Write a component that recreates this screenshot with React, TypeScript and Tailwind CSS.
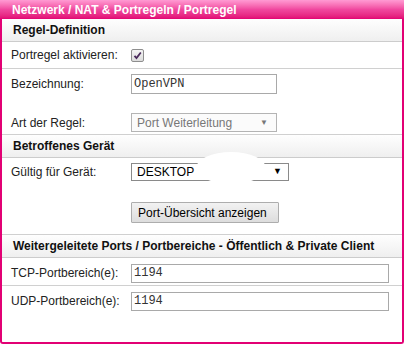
import React from 'react';

const font = { fontFamily: '"Liberation Sans", Arial, sans-serif' };
const mono = { fontFamily: '"Liberation Mono", "Courier New", monospace' };

const SectionHeader: React.FC<{ title: string }> = ({ title }) => (
  <div className="h-[23px] flex items-center px-[11px] border-b border-[#cccccc] bg-gradient-to-b from-[#fefefe] to-[#efefef] text-[12px] font-bold text-[#111]">
    {title}
  </div>
);

const Label: React.FC<{ children: React.ReactNode }> = ({ children }) => (
  <div className="w-[120px] shrink-0 text-[12px] text-[#222]">{children}</div>
);

export default function App() {
  return (
    <div className="w-[407px] h-[345px] bg-white" style={font}>
      <div className="w-[404px] h-[344px] border-2 border-t-0 border-[#e20074] rounded-b-[3px] flex flex-col">
        {/* Title bar */}
        <div className="h-[19px] -mx-[2px] flex items-center px-[12px] bg-gradient-to-b from-[#ff9ad3] via-[#f0479f] to-[#e20074] text-white text-[12px] font-bold">
          Netzwerk / NAT &amp; Portregeln / Portregel
        </div>

        <SectionHeader title="Regel-Definition" />

        <div className="h-[27px] flex items-center px-[9px] border-b border-[#d0d0d0]">
          <Label>Portregel aktivieren:</Label>
          <div className="w-[13px] h-[13px] rounded-[2px] border border-[#8e8e8e] bg-gradient-to-b from-[#f4f4f4] to-[#dcdcdc] flex items-center justify-center">
            <svg width="9" height="9" viewBox="0 0 9 9">
              <path d="M1.5 4.8 L3.5 7 L7.8 1.5" fill="none" stroke="#4a2a5c" strokeWidth="1.8" />
            </svg>
          </div>
        </div>

        <div className="h-[66px] flex flex-col px-[9px] border-b border-[#d0d0d0] pt-[5px] gap-[19px]">
          <div className="flex items-center">
            <Label>Bezeichnung:</Label>
            <div className="w-[146px] h-[20px] border border-[#a9a9a9] flex items-center px-[2px] text-[12px] text-[#333]" style={mono}>
              OpenVPN
            </div>
          </div>
          <div className="flex items-center">
            <Label>Art der Regel:</Label>
            <div className="w-[146px] h-[19px] border border-[#b4b4b4] bg-[#fbfbfb] flex items-center justify-between pl-[5px] pr-[8px] text-[12px] text-[#777]">
              <span>Port Weiterleitung</span>
              <span className="text-[8px] text-[#777]">▼</span>
            </div>
          </div>
        </div>

        <SectionHeader title="Betroffenes Gerät" />

        <div className="h-[77px] flex flex-col px-[9px] border-b border-[#d0d0d0] pt-[5px] gap-[21px]">
          <div className="flex items-center">
            <Label>Gültig für Gerät:</Label>
            <div className="w-[158px] h-[18px] border border-[#8a8a8a] bg-white flex items-center justify-between pl-[5px] pr-[6px] text-[12px] text-black relative">
              <span>DESKTOP</span>
              <span className="text-[9px]">▼</span>
              <div className="absolute left-[64px] -top-[12px] w-[70px] h-[32px] rounded-[50%] bg-white"></div>
            </div>
          </div>
          <div className="flex items-center">
            <div className="w-[120px] shrink-0" />
            <div className="w-[148px] h-[21px] border border-[#adadad] rounded-[1px] bg-gradient-to-b from-[#f2f2f2] to-[#dddddd] flex items-center px-[6px] text-[12px] text-black">
              Port-Übersicht anzeigen
            </div>
          </div>
        </div>

        <SectionHeader title="Weitergeleitete Ports / Portbereiche - Öffentlich & Private Client" />

        <div className="h-[28px] flex items-center px-[9px] pt-[3px] border-b border-[#d0d0d0]">
          <Label>TCP-Portbereich(e):</Label>
          <div className="w-[258px] h-[19px] border border-[#a9a9a9] flex items-center px-[2px] text-[12px] text-[#333]" style={mono}>
            1194
          </div>
        </div>
        <div className="h-[28px] flex items-center px-[9px] pt-[2px]">
          <Label>UDP-Portbereich(e):</Label>
          <div className="w-[258px] h-[19px] border border-[#a9a9a9] flex items-center px-[2px] text-[12px] text-[#333]" style={mono}>
            1194
          </div>
        </div>
      </div>
    </div>
  );
}
